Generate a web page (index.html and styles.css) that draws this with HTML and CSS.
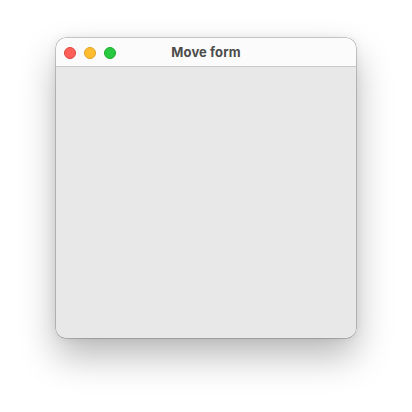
FILE: index.html
```html
<!DOCTYPE html>
<html>
<head>
<meta charset="utf-8">
<link rel="stylesheet" href="styles.css">
</head>
<body>
<div class="stage">
  <div class="window">
    <div class="titlebar">
      <div class="lights">
        <span class="light red"></span>
        <span class="light yellow"></span>
        <span class="light green"></span>
      </div>
      <div class="title">Move form</div>
    </div>
    <div class="content"></div>
  </div>
</div>
</body>
</html>
```
FILE: styles.css
```css
html, body {
  margin: 0;
  padding: 0;
  background: #ffffff;
}
.stage {
  width: 412px;
  height: 412px;
  box-sizing: border-box;
  padding: 38px 56px;
}
.window {
  width: 300px;
  height: 300px;
  border-radius: 10px;
  overflow: hidden;
  display: flex;
  flex-direction: column;
  background: #e8e8e8;
  box-shadow: 0 0 0 0.5px rgba(0,0,0,0.35), 0 18px 36px rgba(0,0,0,0.28), 0 0 10px rgba(0,0,0,0.08);
}
.titlebar {
  height: 28px;
  flex: none;
  background: #fbfbfb;
  border-bottom: 1px solid #c9c9c9;
  display: flex;
  align-items: center;
  position: relative;
}
.lights {
  display: flex;
  gap: 8px;
  padding-left: 8px;
  padding-top: 1px;
}
.light {
  width: 12px;
  height: 12px;
  border-radius: 50%;
  box-sizing: border-box;
}
.red { background: #fe5f57; border: 0.5px solid #e0443e; }
.yellow { background: #febc2e; border: 0.5px solid #dea123; }
.green { background: #28c840; border: 0.5px solid #1aab29; }
.title {
  position: absolute;
  left: 0;
  right: 0;
  top: 0;
  bottom: 0;
  display: flex;
  align-items: center;
  justify-content: center;
  font-family: Inter, "Liberation Sans", sans-serif;
  font-weight: 700;
  font-size: 13px;
  letter-spacing: 0.1px;
  color: #4c4c4c;
  padding-bottom: 1px;
}
.content {
  flex: 1;
  background: #e8e8e8;
}
```
